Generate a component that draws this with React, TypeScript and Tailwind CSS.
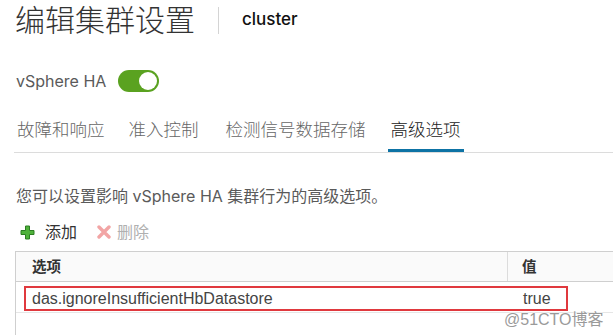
import React from "react";

const TABS = [
  { label: "故障和响应", cls: "ml-0" },
  { label: "准入控制", cls: "ml-[18px]" },
  { label: "检测信号数据存储", cls: "ml-[21px]" },
  { label: "高级选项", cls: "ml-[19px]", active: true },
];

function PlusIcon() {
  return (
    <svg width="15" height="15" viewBox="0 0 15 15">
      <path
        d="M5.5 1h4v4.5H14v4H9.5V14h-4V9.5H1v-4h4.5z"
        fill="#4fb23b"
        stroke="#2c7d22"
        strokeWidth="1"
        strokeLinejoin="round"
      />
    </svg>
  );
}

function CrossIcon() {
  return (
    <svg width="14" height="14" viewBox="0 0 14 14">
      <path
        d="M2 2l10 10M12 2L2 12"
        stroke="#f2a5a5"
        strokeWidth="3.4"
        strokeLinecap="round"
      />
    </svg>
  );
}

export default function App() {
  return (
    <div className="relative w-[613px] h-[335px] overflow-hidden bg-white font-['Inter','Noto_Sans_CJK_SC',sans-serif] text-[#333]">
      {/* header */}
      <div className="flex items-center h-[40px] pl-[15px]">
        <h1 className="text-[30px] leading-none font-light text-[#333]">编辑集群设置</h1>
        <div className="ml-[23px] w-px h-[27px] bg-[#d4d4d4]" />
        <span className="ml-[23px] text-[17px] font-medium text-[#111]">cluster</span>
      </div>

      <div className="flex items-center h-[22px] mt-[30px] pl-[16px]">
        <span className="text-[16px] text-[#5a5a5a]">vSphere HA</span>
        <div className="ml-[12px] w-[41px] h-[22px] rounded-full bg-[#5aa220] flex items-center justify-end pr-[2px]">
          <div className="w-[18px] h-[18px] rounded-full bg-white" />
        </div>
      </div>

      {/* tabs */}
      <div className="mt-[20px] ml-[14px] flex border-b border-[#dcdcdc]">
        {TABS.map((t) => (
          <div
            key={t.label}
            className={`${t.cls} h-[40px] pt-[8px] px-[3px] leading-[20px] text-[17.5px] font-light border-b-[3px] ${
              t.active ? "border-[#0d73a5] text-[#222]" : "border-transparent text-[#666]"
            }`}
          >
            {t.label}
          </div>
        ))}
      </div>

      <p className="mt-[33px] pl-[16px] text-[16px] leading-[20px] text-[#5a5a5a]">
        您可以设置影响 vSphere HA 集群行为的高级选项。
      </p>

      {/* toolbar */}
      <div className="mt-[16px] pl-[20px] flex items-center h-[20px] text-[16px]">
        <PlusIcon />
        <span className="ml-[10px] text-[#333]">添加</span>
        <span className="ml-[20px]">
          <CrossIcon />
        </span>
        <span className="ml-[6px] text-[#b0b0b0]">删除</span>
      </div>

      {/* table */}
      <div className="mt-[9px] ml-[15px] w-[620px] h-[100px] border-l border-t border-[#cfcfcf]">
        <div className="flex h-[30px] bg-[#fafafa] border-b border-[#cfcfcf] text-[14.5px] font-bold text-[#333]">
          <div className="w-[492px] border-r border-[#dcdcdc] pl-[16px] flex items-center">选项</div>
          <div className="pl-[14px] flex items-center">值</div>
        </div>
        <div className="h-[31px] border-b border-[#e6e6e6] pl-[8px] pt-[4px]">
          <div className="w-[544px] h-[25px] border-2 border-[#e0393e] flex items-center font-['Liberation_Sans',sans-serif] text-[16px] text-[#444]">
            <span className="pl-[6px] w-[497px]">das.ignoreInsufficientHbDatastore</span>
            <span>true</span>
          </div>
        </div>
      </div>

      {/* watermark */}
      <div className="absolute left-[504px] top-[308px] font-['Liberation_Sans','Noto_Sans_CJK_SC',sans-serif] text-[16px] text-[#9a9a9a] [text-shadow:0_0_2px_#fff,0_0_2px_#fff]">
        @51CTO博客
      </div>
    </div>
  );
}
